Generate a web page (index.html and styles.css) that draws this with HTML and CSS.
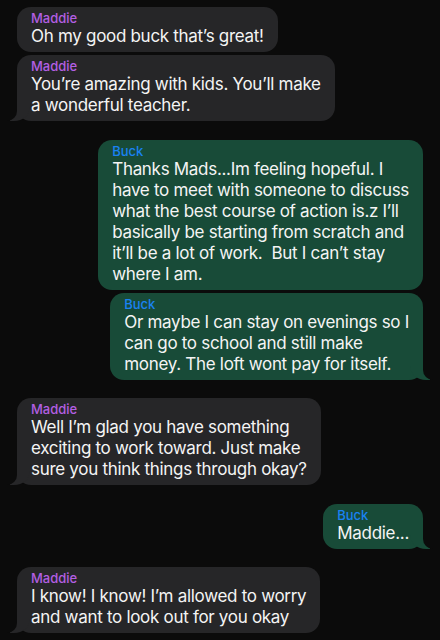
FILE: index.html
```html
<!DOCTYPE html>
<html lang="en">
<head>
    <meta charset="UTF-8">
    <meta name="viewport" content="width=device-width, initial-scale=1.0">
    <title>Messages</title>
    <link rel="stylesheet" href="styles.css">
</head>
<body>
    <div class="thread">
        <div class="group">
            <div class="bubble them">
                <div class="name">Maddie</div>
                <div class="text">Oh my good buck that’s great!</div>
            </div>
            <div class="bubble them tail">
                <div class="name">Maddie</div>
                <div class="text">You’re amazing with kids. You’ll make<br>a wonderful teacher.</div>
            </div>
        </div>

        <div class="group">
            <div class="bubble me">
                <div class="name">Buck</div>
                <div class="text">Thanks Mads...Im feeling hopeful. I<br>have to meet with someone to discuss<br>what the best course of action is.z I’ll<br>basically be starting from scratch and<br>it’ll be a lot of work.&nbsp; But I can’t stay<br>where I am.</div>
            </div>
            <div class="bubble me tail">
                <div class="name">Buck</div>
                <div class="text">Or maybe I can stay on evenings so I<br>can go to school and still make<br>money. The loft wont pay for itself.</div>
            </div>
        </div>

        <div class="group">
            <div class="bubble them tail">
                <div class="name">Maddie</div>
                <div class="text">Well I’m glad you have something<br>exciting to work toward. Just make<br>sure you think things through okay?</div>
            </div>
        </div>

        <div class="group">
            <div class="bubble me tail">
                <div class="name">Buck</div>
                <div class="text">Maddie...</div>
            </div>
        </div>

        <div class="group">
            <div class="bubble them tail">
                <div class="name">Maddie</div>
                <div class="text">I know! I know! I’m allowed to worry<br>and want to look out for you okay</div>
            </div>
        </div>
    </div>
</body>
</html>
```

FILE: styles.css
```css
body {
    margin: 0;
    background-color: #0b0b0b;
    font-family: Inter, "Noto Sans", sans-serif;
    color: #f4f4f4;
}
.thread {
    display: flex;
    flex-direction: column;
    gap: 18.5px;
    padding: 7px 17px;
}
.group {
    display: flex;
    flex-direction: column;
    gap: 3px;
}
.bubble {
    position: relative;
    padding: 3px 14px 5px;
    border-radius: 14px;
    white-space: nowrap;
}
.them {
    align-self: flex-start;
    background-color: #262628;
}
.me {
    align-self: flex-end;
    background-color: #184b38;
}
.name {
    font-size: 13px;
    line-height: 16px;
    font-weight: 500;
}
.them .name {
    color: #b35fe2;
}
.me .name {
    color: #1a82f2;
}
.text {
    font-size: 17px;
    line-height: 21px;
    letter-spacing: -0.3px;
}

/* bubble tails */
.tail::before,
.tail::after {
    content: "";
    position: absolute;
    bottom: 0;
    height: 17px;
}
.them.tail::before {
    left: -7px;
    border-left: 20px solid #262628;
    border-bottom-right-radius: 16px 14px;
}
.them.tail::after {
    left: -26px;
    width: 26px;
    background-color: #0b0b0b;
    border-bottom-right-radius: 10px;
}
.me.tail::before {
    right: -7px;
    border-right: 20px solid #184b38;
    border-bottom-left-radius: 16px 14px;
}
.me.tail::after {
    right: -26px;
    width: 26px;
    background-color: #0b0b0b;
    border-bottom-left-radius: 10px;
}
```
